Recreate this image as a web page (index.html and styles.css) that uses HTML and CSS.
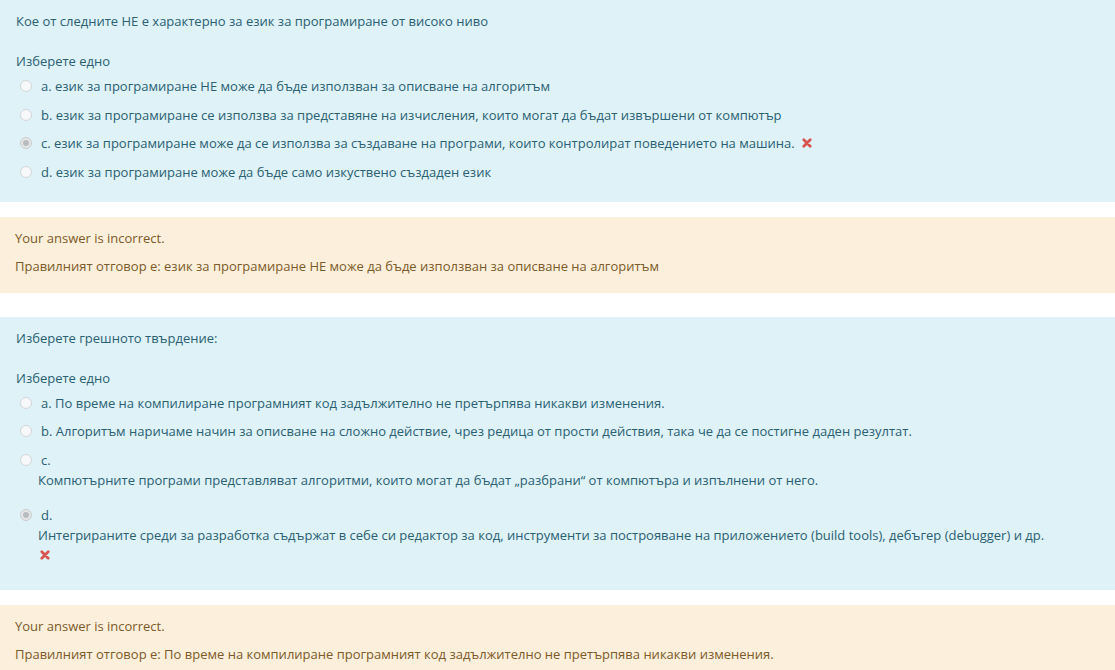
FILE: index.html
```html
<!DOCTYPE html>
<html lang="bg">
<head>
<meta charset="utf-8">
<link rel="stylesheet" href="styles.css">
</head>
<body>
<div class="page">
  <div class="panel">
    <div class="qtext">Кое от следните НЕ е характерно за език за програмиране от високо ниво</div>
    <div class="prompt">Изберете едно</div>
    <div class="answers">
      <div class="opt"><span class="radio"></span><span class="lbl">a. език за програмиране НЕ може да бъде използван за описване на алгоритъм</span></div>
      <div class="opt"><span class="radio"></span><span class="lbl">b. език за програмиране се използва за представяне на изчисления, които могат да бъдат извършени от компютър</span></div>
      <div class="opt"><span class="radio checked"></span><span class="lbl">c. език за програмиране може да се използва за създаване на програми, които контролират поведението на машина.</span><svg class="xicon" viewBox="0 0 10 10"><path d="M1.8 1.8 L8.2 8.2 M8.2 1.8 L1.8 8.2"/></svg></div>
      <div class="opt"><span class="radio"></span><span class="lbl">d. език за програмиране може да бъде само изкуствено създаден език</span></div>
    </div>
  </div>
  <div class="feedback">
    <div class="fline">Your answer is incorrect.</div>
    <div class="fline">Правилният отговор е: език за програмиране НЕ може да бъде използван за описване на алгоритъм</div>
  </div>
  <div class="panel second">
    <div class="qtext">Изберете грешното твърдение:</div>
    <div class="prompt">Изберете едно</div>
    <div class="answers">
      <div class="opt"><span class="radio"></span><span class="lbl">a. По време на компилиране програмният код задължително не претърпява никакви изменения.</span></div>
      <div class="opt"><span class="radio"></span><span class="lbl">b. Алгоритъм наричаме начин за описване на сложно действие, чрез редица от прости действия, така че да се постигне даден резултат.</span></div>
      <div class="opt multi c-opt">
        <div class="opt-head"><span class="radio"></span><span class="lbl">c.</span></div>
        <div class="body">Компютърните програми представляват алгоритми, които могат да бъдат „разбрани“ от компютъра и изпълнени от него.</div>
      </div>
      <div class="opt multi">
        <div class="opt-head"><span class="radio checked"></span><span class="lbl">d.</span></div>
        <div class="body">Интегрираните среди за разработка съдържат в себе си редактор за код, инструменти за построяване на приложението (build tools), дебъгер (debugger) и др.</div>
        <div class="body icon-line"><svg class="xicon" viewBox="0 0 10 10"><path d="M1.8 1.8 L8.2 8.2 M8.2 1.8 L1.8 8.2"/></svg></div>
      </div>
    </div>
  </div>
  <div class="feedback last">
    <div class="fline">Your answer is incorrect.</div>
    <div class="fline">Правилният отговор е: По време на компилиране програмният код задължително не претърпява никакви изменения.</div>
  </div>
</div>
</body>
</html>
```
FILE: styles.css
```css
* { box-sizing: border-box; }
html, body { margin: 0; padding: 0; background: #fff; }
body {
  font-family: "Open Sans", "Noto Sans", sans-serif;
  font-size: 13px;
  line-height: 20px;
  color: #2a6072;
}
.page { display: flex; flex-direction: column; }
.panel {
  background: #def2f8;
  padding: 11px 15px 16px 16px;
}
.panel.second { margin-top: 24px; padding-bottom: 21px; }
.qtext { line-height: 20px; }
.prompt { margin-top: 20px; }
.answers { display: flex; flex-direction: column; margin-top: 0.75px; }
.opt {
  display: flex;
  align-items: center;
  padding: 4.25px 0;
  min-height: 28.5px;
}
.opt.multi { flex-direction: column; align-items: stretch; }
.opt.c-opt { padding-bottom: 10.75px; }
.opt-head { display: flex; align-items: center; height: 20px; }
.body { padding-left: 22px; line-height: 20px; margin-top: 0; }
.icon-line { display: flex; align-items: center; height: 20px; padding-left: 24px; }
.radio {
  width: 12px; height: 12px;
  border-radius: 50%;
  border: 1px solid #d3d6d8;
  background: #f7f8f9;
  margin-left: 4px;
  margin-right: 9px;
  flex: none;
  position: relative;
}
.radio.checked { background: #e4e6e7; border-color: #c9cccd; }
.radio.checked::after {
  content: "";
  position: absolute;
  left: 2px; top: 2px;
  width: 6px; height: 6px;
  border-radius: 50%;
  background: #b9bcbe;
}
.xicon {
  width: 10px; height: 10px;
  margin-left: 7px;
  flex: none;
}
.icon-line .xicon { margin-left: 0; }
.xicon path { stroke: #d9534f; stroke-width: 2.8; stroke-linecap: round; fill: none; }
.feedback {
  margin-top: 15px;
  background: #fcefdc;
  color: #7d5a29;
  padding: 11px 15px 17px 15px;
  display: flex;
  flex-direction: column;
  gap: 8px;
}
.feedback.last { padding-bottom: 20px; }
```
